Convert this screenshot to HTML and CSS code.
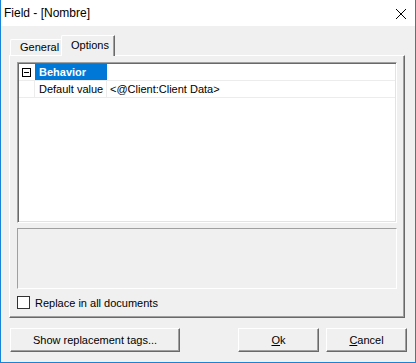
FILE: index.html
```html
<!DOCTYPE html>
<html lang="en">
<head>
  <meta charset="UTF-8">
  <title>Field - [Nombre]</title>
  <link rel="stylesheet" href="styles.css">
</head>
<body>

  <div class="window">
    <div class="titlebar">
      <span class="title">Field - [Nombre]</span>
      <svg class="close" width="10" height="10" viewBox="0 0 10 10">
        <path d="M0 0 L10 10 M10 0 L0 10" stroke="#000" stroke-width="1" fill="none"/>
      </svg>
    </div>

    <div class="client">
      <div class="tabs">
        <div class="tab">General</div>
        <div class="tab active">Options</div>
      </div>

      <div class="panel">
        <!-- property grid -->
        <div class="grid">
          <div class="row category">
            <div class="gutter"><span class="minus"></span></div>
            <div class="name">Behavior</div>
            <div class="value"></div>
          </div>
          <div class="row">
            <div class="gutter"></div>
            <div class="name">Default value</div>
            <div class="value">&lt;@Client:Client Data&gt;</div>
          </div>
        </div>

        <div class="desc"></div>

        <label class="check">
          <span class="box"></span>
          <span>Replace in all documents</span>
        </label>
      </div>

      <div class="buttons">
        <button class="btn wide">Show replacement tags...</button>
        <span class="spacer"></span>
        <button class="btn"><u>O</u>k</button>
        <button class="btn"><u>C</u>ancel</button>
      </div>
    </div>
  </div>

</body>
</html>
```

FILE: styles.css
```css
body {
  margin: 0;
  padding: 0;
  font-family: 'Liberation Sans', Arial, sans-serif;
  font-size: 11px;
  color: #000;
  background: #fff;
}

.window {
  width: 416px;
  height: 363px;
  box-sizing: border-box;
  border: 1px solid #1883d7;
  border-top: none;
  display: flex;
  flex-direction: column;
}

.titlebar {
  height: 26px;
  flex: none;
  background: #fff;
  display: flex;
  align-items: center;
  padding: 0 9px 0 3px;
}

.title {
  font-size: 12px;
  flex: 1;
}

.close {
  display: block;
  margin-top: 1px;
}

.client {
  flex: 1;
  background: #f0f0f0;
  display: flex;
  flex-direction: column;
  padding-top: 9px;
}

/* tabs */
.tabs {
  height: 20px;
  margin: 0 10px 0 9px;
  display: flex;
  align-items: flex-end;
}

.tab {
  box-sizing: border-box;
  height: 16px;
  width: 53px;
  margin-right: -2px;
  border-top: 1px solid #fff;
  border-left: 1px solid #fff;
  border-radius: 2px 0 0 0;
  padding-left: 9px;
  line-height: 15px;
}

.tab.active {
  position: relative;
  z-index: 1;
  height: 21px;
  width: 54px;
  margin-right: 0;
  margin-bottom: -1px;
  background: #f0f0f0;
  border-right: 1px solid #696969;
  box-shadow: inset -1px 0 0 #a0a0a0;
  line-height: 18px;
  padding-left: 9px;
}

/* tab page */
.panel {
  height: 263px;
  box-sizing: border-box;
  margin: 0 10px 0 8px;
  border-top: 1px solid #fff;
  border-left: 1px solid #fff;
  border-right: 1px solid #696969;
  border-bottom: 1px solid #696969;
  box-shadow: inset -1px -1px 0 #a0a0a0;
  padding: 6px 7px 0 7px;
  display: flex;
  flex-direction: column;
}

.grid {
  height: 161px;
  box-sizing: border-box;
  background: #fff;
  border-top: 1px solid #a0a0a0;
  border-left: 1px solid #a0a0a0;
  border-right: 1px solid #fff;
  border-bottom: 1px solid #fff;
  box-shadow: inset 1px 1px 0 #696969, inset -1px -1px 0 #e3e3e3;
  padding: 1px 1px 0 1px;
}

.row {
  display: flex;
  height: 17px;
  box-sizing: border-box;
  border-bottom: 1px solid #ececec;
  line-height: 16px;
}

.gutter {
  width: 16px;
  flex: none;
  box-sizing: border-box;
  border-right: 1px solid #ececec;
  display: flex;
  align-items: center;
  justify-content: center;
}

.category .gutter {
  border-right: none;
}

.minus {
  width: 9px;
  height: 9px;
  box-sizing: border-box;
  border: 1px solid #000;
  background: #fff;
  display: flex;
  align-items: center;
  justify-content: center;
  margin-right: 1px;
}

.minus::after {
  content: "";
  width: 5px;
  height: 1px;
  background: #000;
}

.name {
  width: 72px;
  flex: none;
  padding-left: 4px;
  box-sizing: border-box;
  border-right: 1px solid #ececec;
  white-space: nowrap;
}

.category .name {
  background: #0078d7;
  color: #fff;
  font-weight: bold;
  border-right: none;
}

.value {
  flex: 1;
  padding-left: 3px;
  white-space: nowrap;
}

.desc {
  margin-top: 5px;
  height: 61px;
  box-sizing: border-box;
  border-top: 1px solid #a0a0a0;
  border-left: 1px solid #a0a0a0;
  border-right: 1px solid #fff;
  border-bottom: 1px solid #fff;
}

.check {
  margin-top: 7px;
  height: 13px;
  display: flex;
  align-items: center;
  gap: 5px;
}

.box {
  width: 13px;
  height: 13px;
  box-sizing: border-box;
  border: 1px solid #333;
  background: #fff;
}

/* dialog buttons */
.buttons {
  display: flex;
  margin: 10px 8px 0 9px;
  gap: 7px;
}

.spacer {
  flex: 1;
}

.btn {
  font-family: inherit;
  font-size: 11px;
  color: #000;
  width: 81px;
  height: 24px;
  padding: 0;
  background: #f0f0f0;
  border-top: 1px solid #fff;
  border-left: 1px solid #fff;
  border-right: 1px solid #696969;
  border-bottom: 1px solid #696969;
  box-shadow: inset -1px -1px 0 #a0a0a0;
  border-radius: 0;
}

.btn.wide {
  width: 170px;
}
```
